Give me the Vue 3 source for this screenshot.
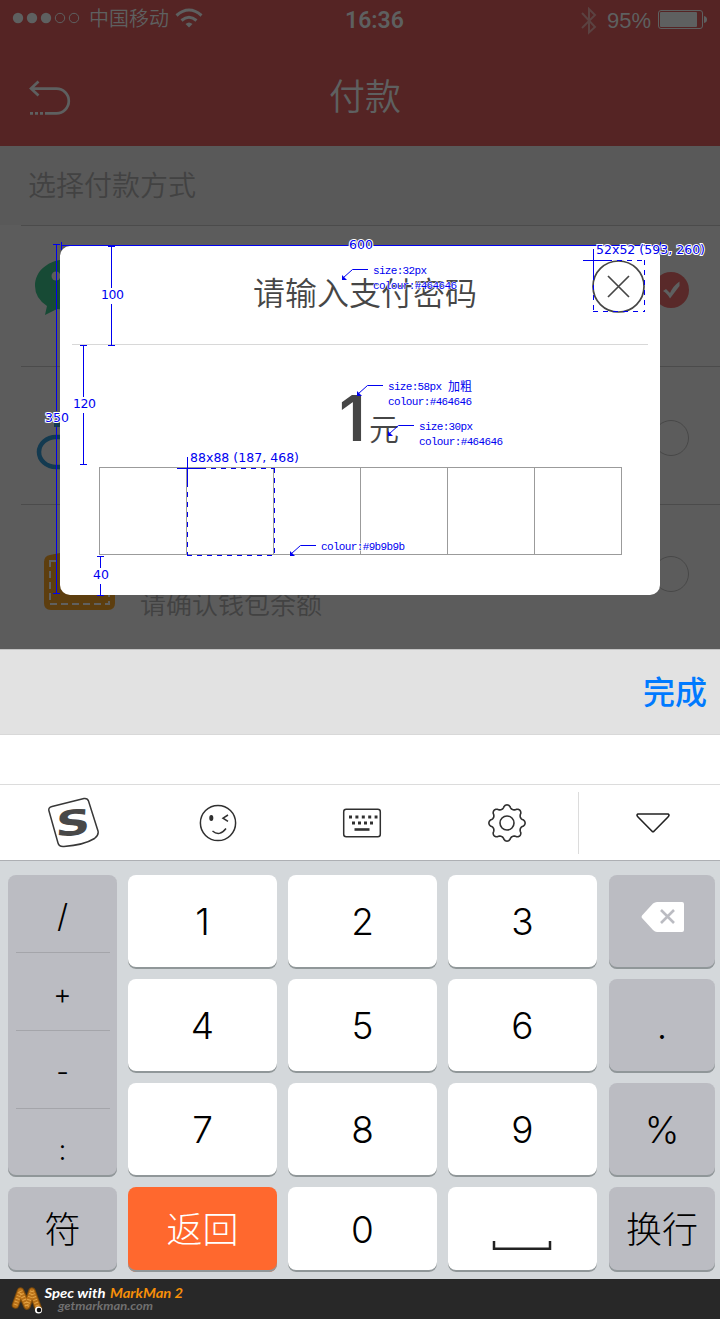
<script setup>
const gear = Array.from({ length: 145 }, (_, i) => {
  const a = (i / 144) * Math.PI * 2
  const c = Math.cos(8 * a)
  const r = 16.3 + 1.8 * Math.sign(c) * Math.pow(Math.abs(c), 0.7)
  return `${i ? 'L' : 'M'}${(20 + r * Math.sin(a)).toFixed(2)} ${(20 - r * Math.cos(a)).toFixed(2)}`
}).join('') + 'Z'

const symbols = ['/', '+', '-', ':']
const keys = [
  { t: '1' }, { t: '2' }, { t: '3' }, { icon: 'back', c: 'grey' },
  { t: '4' }, { t: '5' }, { t: '6' }, { t: '.', c: 'grey' },
  { t: '7' }, { t: '8' }, { t: '9' }, { t: '%', c: 'grey' },
  { t: '符', c: 'grey cjk' }, { t: '返回', c: 'orange cjk' }, { t: '0' }, { icon: 'space' }, { t: '换行', c: 'grey cjk' },
]

const measures = [
  { t: '600', x: 349, y: 249, w: 24 },
  { t: '100', x: 101, y: 299, w: 23 },
  { t: '120', x: 73, y: 408, w: 23 },
  { t: '350', x: 45, y: 422, w: 24 },
  { t: '40', x: 93, y: 579, w: 16 },
  { t: '88x88 (187, 468)', x: 190, y: 462, w: 109 },
  { t: '52x52 (593, 260)', x: 596, y: 254, w: 109 },
]
const notes = [
  { t: 'size:32px', x: 373, y: 274, w: 54 },
  { t: 'colour:#464646', x: 373, y: 289, w: 84 },
  { t: 'size:58px', x: 388, y: 390, w: 54 },
  { t: 'colour:#464646', x: 388, y: 405, w: 84 },
  { t: 'size:30px', x: 419, y: 430, w: 54 },
  { t: 'colour:#464646', x: 419, y: 445, w: 84 },
  { t: 'colour:#9b9b9b', x: 321, y: 550, w: 84 },
]
const pointers = [[342, 279], [357, 395], [388, 435], [290, 555]]
</script>

<template>
  <div class="page">
    <header class="head">
      <div class="status">
        <svg class="dots" width="68" height="14" viewBox="0 0 68 14">
          <g fill="#5e6060"><circle cx="6" cy="7" r="5.2" /><circle cx="20" cy="7" r="5.2" /><circle cx="34" cy="7" r="5.2" /></g>
          <g fill="none" stroke="#5e6060"><circle cx="48" cy="7" r="4.700" /><circle cx="62" cy="7" r="4.700" /></g>
        </svg>
        <span class="carrier">中国移动</span>
        <svg class="wifi" width="28" height="20" viewBox="0 0 28 20">
          <g fill="none" stroke="#5e6060" stroke-width="3"><path d="M1.500 7.500Q14-3.500 26.500 7.500" /><path d="M6.500 12.500Q14 6 21.500 12.500" /></g>
          <path d="M10.500 16Q14 13 17.500 16L14 19.500Z" fill="#5e6060" />
        </svg>
        <b class="time">16:36</b>
        <svg class="bt" width="16" height="28" viewBox="0 0 16 28" fill="none" stroke="#5b4241" stroke-width="2"><path d="M1 6L14 20L8 25.500V2L14 8L1 21" /></svg>
        <span class="pct">95%</span>
        <svg class="battery" width="50" height="20" viewBox="0 0 50 20">
          <rect x=".5" y=".5" width="44" height="18" rx="2.500" fill="none" stroke="#5e6060" />
          <rect x="2" y="2" width="37" height="15" rx="1" fill="#5e6060" /><path d="M46 6Q49 6.500 49 9.500Q49 12.500 46 13Z" fill="#5e6060" />
        </svg>
      </div>
      <div class="title-row">
        <svg width="44" height="38" viewBox="0 0 44 38" fill="none" stroke="#5e6060" stroke-width="2.700">
          <path d="M10.500 1.500L3 8.500L10.500 15.500M3.500 8.700H28.500A12.300 12.300 0 0 1 28.500 33.300H20" /><path d="M2 33.300H20" stroke-dasharray="3 2" />
        </svg>
        <h1>付款</h1>
      </div>
    </header>

    <main class="body">
      <div class="section">选择付款方式</div>
      <div class="row r1">
        <svg width="70" height="60" viewBox="0 0 70 60"><path d="M36 0C14 0 1 12 1 27Q1 39 13 47L11 56L23 50Q70 56 70 27Q66 0 36 0Z" fill="#174a35" /><circle cx="22" cy="17" r="4.500" fill="#5c5c5c" /></svg>
        <svg class="radio" width="38" height="38" viewBox="0 0 38 38"><circle cx="19" cy="19" r="18" fill="#592929" /><path d="M11 20L14 18L18 22Q21 15 27.500 10.500V15L18 27.500Q15 22 11 20Z" fill="#5e6060" /></svg>
      </div>
      <div class="row r2">
        <svg width="60" height="52" viewBox="0 0 60 52"><rect x="3" y="18" width="54" height="30" rx="17" ry="15" fill="none" stroke="#133a50" stroke-width="4.500" /><path d="M18 6H40" stroke="#133a50" stroke-width="4" /></svg>
        <svg class="radio" width="38" height="38" viewBox="0 0 38 38"><circle cx="19" cy="19" r="17.500" fill="none" stroke="#484848" /></svg>
      </div>
      <div class="row r3">
        <svg width="72" height="58" viewBox="0 0 72 58"><path d="M7 2L17 0H66L72 8V50Q72 57 65 57H8Q1 57 1 50V9Q1 3 7 2Z" fill="#5d3e0f" /><rect x="7" y="8" width="59" height="43" fill="none" stroke="#60605f" stroke-width="2" stroke-dasharray="7 4" /></svg>
        <span class="sub">请确认钱包余额</span>
        <svg class="radio" width="38" height="38" viewBox="0 0 38 38"><circle cx="19" cy="19" r="17.500" fill="none" stroke="#484848" /></svg>
      </div>
    </main>

    <section class="modal">
      <div class="modal-head">
        <h2>请输入支付密码</h2>
        <svg class="close" width="54" height="54" viewBox="0 0 54 54" fill="none" stroke="#464646" stroke-width="1.700"><circle cx="26.500" cy="26.500" r="25.500" /><path d="M16 16L37 37M37 16L16 37" /></svg>
      </div>
      <div class="amount"><b>1</b><span>元</span></div>
      <div class="boxes"><i v-for="n in 6" :key="n"></i></div>
    </section>

    <div class="done"><span>完成</span></div>
    <div class="blank"></div>
    <div class="tools">
      <svg width="52" height="52" viewBox="0 0 52 52">
        <path d="M5 9.500L37 1.500Q40.500 1 41.500 4L51 34Q52 38 47.500 41.500Q37 48 17 49.500Q12 50 11 46L2 14Q1 10.500 5 9.500Z" fill="none" stroke="#383838" stroke-width="1.500" />
        <text class="s" transform="translate(26 25.500) rotate(-5) skewX(-8) scale(1.350 .97)" x="0" y="13" text-anchor="middle">S</text>
      </svg>
      <svg width="40" height="40" viewBox="0 0 40 40" fill="none" stroke="#303030" stroke-width="1.500"><circle cx="20" cy="20" r="17.600" /><ellipse cx="13.300" cy="15" rx="1.300" ry="2.200" fill="#303030" /><path d="M30 12L25 15.200L30 18.300M14.500 28Q21.500 34 28 25.500" /></svg>
      <svg width="40" height="40" viewBox="0 0 40 40" fill="none" stroke="#303030"><rect x="1.700" y="6.200" width="36.600" height="27.600" rx="2.500" stroke-width="1.500" /><path d="M7 14H35.500" stroke-width="3" stroke-dasharray="3 3.400" /><path d="M10 20H32" stroke-width="3" stroke-dasharray="3 3" /><path d="M12.500 26.500H27.500" stroke-width="2.600" /></svg>
      <svg class="gear" width="40" height="40" viewBox="0 0 40 40" fill="none" stroke="#303030" stroke-width="1.600"><path :d="gear" stroke-linejoin="round" /><circle cx="20" cy="20" r="7" /></svg>
      <i class="split"></i>
      <svg width="36" height="24" viewBox="0 0 36 24" fill="none" stroke="#222" stroke-width="1.600" stroke-linejoin="round"><path d="M3 3H33Q35 4 33 6L18.700 20.500Q18 21 17.300 20.500L3 6Q1 4 3 3Z" /></svg>
    </div>

    <div class="pad">
      <div class="key grey stack"><span v-for="s in symbols" :key="s">{{ s }}</span></div>
      <div v-for="(k, i) in keys" :key="i" class="key" :class="k.c">
        <svg v-if="k.icon === 'back'" class="bs" width="44" height="32" viewBox="0 0 44 32"><path d="M1 14.500L12 2.500Q14 1 16 1H41Q43 1 43 3V29Q43 31 41 31H16Q14 31 12 29L1 17Q0 16 1 14.500Z" fill="#fff" /><path d="M20 9L33 22M33 9L20 22" stroke="#bbbcc2" stroke-width="2.600" /></svg>
        <svg v-else-if="k.icon === 'space'" class="sp" width="60" height="12" viewBox="0 0 60 12"><path d="M2 1V8.700H58V1" fill="none" stroke="#222" stroke-width="2.500" /></svg>
        <span v-else>{{ k.t }}</span>
      </div>
    </div>

    <footer class="foot">
      <svg width="200" height="40" viewBox="0 0 200 40">
        <g fill="none" stroke-linecap="round">
          <path d="M15.500 26L20.500 12L27 27L32 12L38.500 30" stroke="#7b4a0b" stroke-width="7.500" stroke-linejoin="round" />
          <path d="M15.500 26L20.500 12L27 27L32 12L38.500 30" stroke="#b87018" stroke-width="5.500" stroke-linejoin="round" />
          <path d="M15.500 26L20.500 12M27 27L32 12" stroke="#e5a545" stroke-width="4" stroke-dasharray="1 2" stroke-linecap="butt" />
          <path d="M20.500 12L27 27M32 12L38.500 30" stroke="#e5a545" stroke-width="4" stroke-dasharray="1 2" stroke-linecap="butt" />
        </g>
        <circle cx="38.500" cy="31" r="3.500" fill="#fff" /><circle cx="39" cy="31" r="2.300" fill="#111" />
        <text class="brand" x="44.500" y="19" fill="#fff" textLength="61" lengthAdjust="spacingAndGlyphs">Spec with</text>
        <text class="brand" x="110" y="19" fill="#f78f08" textLength="73" lengthAdjust="spacingAndGlyphs">MarkMan 2</text>
        <text class="url" x="58" y="31" textLength="95" lengthAdjust="spacingAndGlyphs">getmarkman.com</text>
      </svg>
    </footer>

    <svg class="spec" width="720" height="650" viewBox="0 0 720 650">
      <g fill="none" stroke="#0000f0" shape-rendering="crispEdges">
        <path d="M61.500 242V250M61 245.500H348M374 245.500H660M660.500 242V250" />
        <path d="M53 244.500H60M56.500 245V411M56.500 427V593M53 593.500H60" />
        <path d="M108 246.500H115M111.500 246V288M111.500 304V345M108 345.500H115" />
        <path d="M80 345.500H87M83.500 345V397M83.500 413V464M80 464.500H87" />
        <path d="M97 556.500H104M100.500 556V568M100.500 584V595M97 595.500H104" />
        <path d="M177 468.500H201M187.500 457V482" />
        <path d="M201 468.500H275M187.500 482V555M274.500 468V555M187 555.500H275" stroke-dasharray="5 5" />
        <path d="M583 260.500H607M593.500 249V275" />
        <path d="M607 260.500H645M593.500 275V312M644.500 260V312M593 311.500H645" stroke-dasharray="5 5" />
      </g>
      <g v-for="p in pointers" :key="p[0]" :transform="`translate(${p[0]} ${p[1]})`">
        <path d="M1 -1L10.500 -9.500H26" fill="none" stroke="#0000f0" /><path d="M0 -4V1H5Z" fill="#0000f0" />
      </g>
      <text v-for="m in measures" :key="m.t" class="measure" :x="m.x" :y="m.y" :textLength="m.w">{{ m.t }}</text>
      <text v-for="(n, i) in notes" :key="i" class="note" :x="n.x" :y="n.y" :textLength="n.w" lengthAdjust="spacing">{{ n.t }}</text>
      <text class="note zh" x="448" y="391">加粗</text>
    </svg>
  </div>
</template>

<style>
body { background: #d4d8db; }
</style>

<style scoped>
* { box-sizing: border-box; }
.page { position: relative; width: 720px; height: 1319px; overflow: hidden; display: flex; flex-direction: column; font-family: "Liberation Sans", "Noto Sans CJK SC", sans-serif; }
.page svg { flex: none; display: block; }
h1, h2 { margin: 0; font-weight: 350; }
.head { height: 146px; background: #552424; color: #5e6060; }
.status { height: 40px; display: flex; align-items: center; padding-left: 12px; }
.dots { margin-top: -4px; }
.carrier { font: 350 20px/24px "Noto Sans CJK SC", sans-serif; margin: -4px 0 0 9px; width: 80px; white-space: nowrap; }
.wifi { margin: -4px 0 0 6px; }
.time { font: 600 23px/28px Roboto, sans-serif; margin: 2px 0 0 142px; width: 60px; white-space: nowrap; }
.bt { margin: 2px 0 0 176px; }
.pct { font-size: 22px; line-height: 28px; margin: 1px 0 0 10px; width: 45px; }
.battery { margin-left: 6px; }
.title-row { height: 106px; display: grid; grid-template-columns: 44px 1fr 44px; padding: 0 28px; align-items: center; }
.title-row svg { margin-top: 12px; }
h1 { text-align: center; font-size: 36px; line-height: 50px; margin: 9px 0 0 10px; }
.body { height: 503px; background: #5c5c5c; color: #424242; }
.section { height: 79px; padding-left: 28px; font-weight: 350; font-size: 28px; line-height: 81px; background: #595959; }
.row { display: flex; justify-content: space-between; align-items: flex-start; padding-right: 30px; position: relative; }
.row::before { content: ""; position: absolute; left: 21px; right: 0; top: 0; height: 1px; background: #4b4b4b; }
.r1 { height: 141px; padding-left: 34px; padding-top: 34px; }
.r2 { height: 138px; padding-left: 36px; padding-top: 53px; }
.r3 { height: 145px; padding-left: 43px; padding-top: 49px; justify-content: flex-start; }
.r1 .radio { margin-top: 12px; }
.r3 .radio { margin-left: auto; margin-top: 2px; }
.sub { font-size: 26px; font-weight: 350; line-height: 36px; margin: 34px 0 0 25px; }
.modal { position: absolute; left: 60px; top: 246px; width: 600px; height: 349px; border-radius: 10px; background: #fff; color: #464646; display: flex; flex-direction: column; }
.modal-head { height: 99px; margin: 0 12px; border-bottom: 1px solid #d8d8d8; display: flex; justify-content: flex-end; padding-right: 2px; }
h2 { font-size: 32px; line-height: 44px; margin-top: 26px; width: 224px; margin-right: 115px; white-space: nowrap; }
.close { margin-top: 14px; }
.amount { height: 122px; display: flex; align-items: baseline; padding-left: 279px; padding-top: 35px; }
.amount b { font: 600 63px/76px Inter, sans-serif; width: 30px; }
.amount span { font-size: 30px; font-weight: 350; line-height: 40px; position: relative; top: -1px; }
.boxes { display: grid; grid-template-columns: repeat(6, 87px); width: 523px; height: 88px; margin-left: 39px; border: 1px solid #9b9b9b; border-right: 0; }
.boxes i { border-right: 1px solid #9b9b9b; }
.done { height: 86px; background: #e2e2e2; border-top: 1px solid #c4c4c4; border-bottom: 1px solid #d8d8d8; display: flex; justify-content: flex-end; padding: 21px 13px 0 0; color: #007aff; font-size: 32px; font-weight: 500; line-height: 44px; }
.blank { height: 50px; background: #fff; border-bottom: 1px solid #dcdcdc; }
.tools { height: 76px; background: #fff; border-bottom: 1px solid #adafb3; display: grid; grid-template-columns: 145px 145px 144px 144px 1px 1fr; align-items: center; justify-items: center; }
.gear { margin-left: 2px; }
.s { font: 900 36px "DejaVu Sans", sans-serif; fill: #484848; }
.split { width: 1px; height: 62px; background: #dcdcdc; }
.tools svg:last-child { margin-left: 6px; }
.pad { height: 418px; background: #d4d8db; padding: 14px 5px 7px 8px; display: grid; grid-template-columns: 109px 149px 149px 149px 106px; grid-template-rows: 94px 94px 94px 85px; gap: 10px 11px; justify-content: start; align-content: start; }
.key:nth-child(5), .key:nth-child(9), .key:nth-child(13), .key:nth-child(18) { margin: 0 -1px 0 1px; }
.key { background: #fff; border-radius: 8px; box-shadow: inset 0 -2px 0 #909799; color: #000; display: flex; align-items: center; justify-content: center; font: 300 37px/46px Inter, sans-serif; }
.grey { background: #bbbcc2; }
.orange { background: #ff682e; color: #fff; }
.cjk { font: 300 36px/50px "Noto Sans CJK SC", sans-serif; padding-bottom: 5px; }
.stack { grid-row: 1 / 4; flex-direction: column; justify-content: flex-start; font-size: 28px; }
.stack span { flex: none; height: 78px; width: 94px; padding-top: 6px; line-height: 70px; text-align: center; border-bottom: 1px solid #a4a5aa; }
.stack span:first-child { font-size: 32px; }
.stack span:last-child { border: 0; }
.bs { margin: -10px 0 0 2px; }
.sp { margin: 32px 2px 0 0; }
.foot { height: 40px; background: #282828; }
.brand { font: italic 700 13.500px Lato, sans-serif; }
.url { font: italic 700 12px Lato, sans-serif; fill: #707070; }
.spec { position: absolute; left: 0; top: 0; }
.measure { font: 12.500px "DejaVu Sans", sans-serif; fill: #0000f0; stroke: #fff; stroke-width: 2px; paint-order: stroke; }
.note { font: 11px "Liberation Mono", monospace; fill: #0000f0; stroke: #fff; stroke-width: 1px; paint-order: stroke; }
.zh { font: 12px "Noto Sans CJK SC", sans-serif; }
</style>
